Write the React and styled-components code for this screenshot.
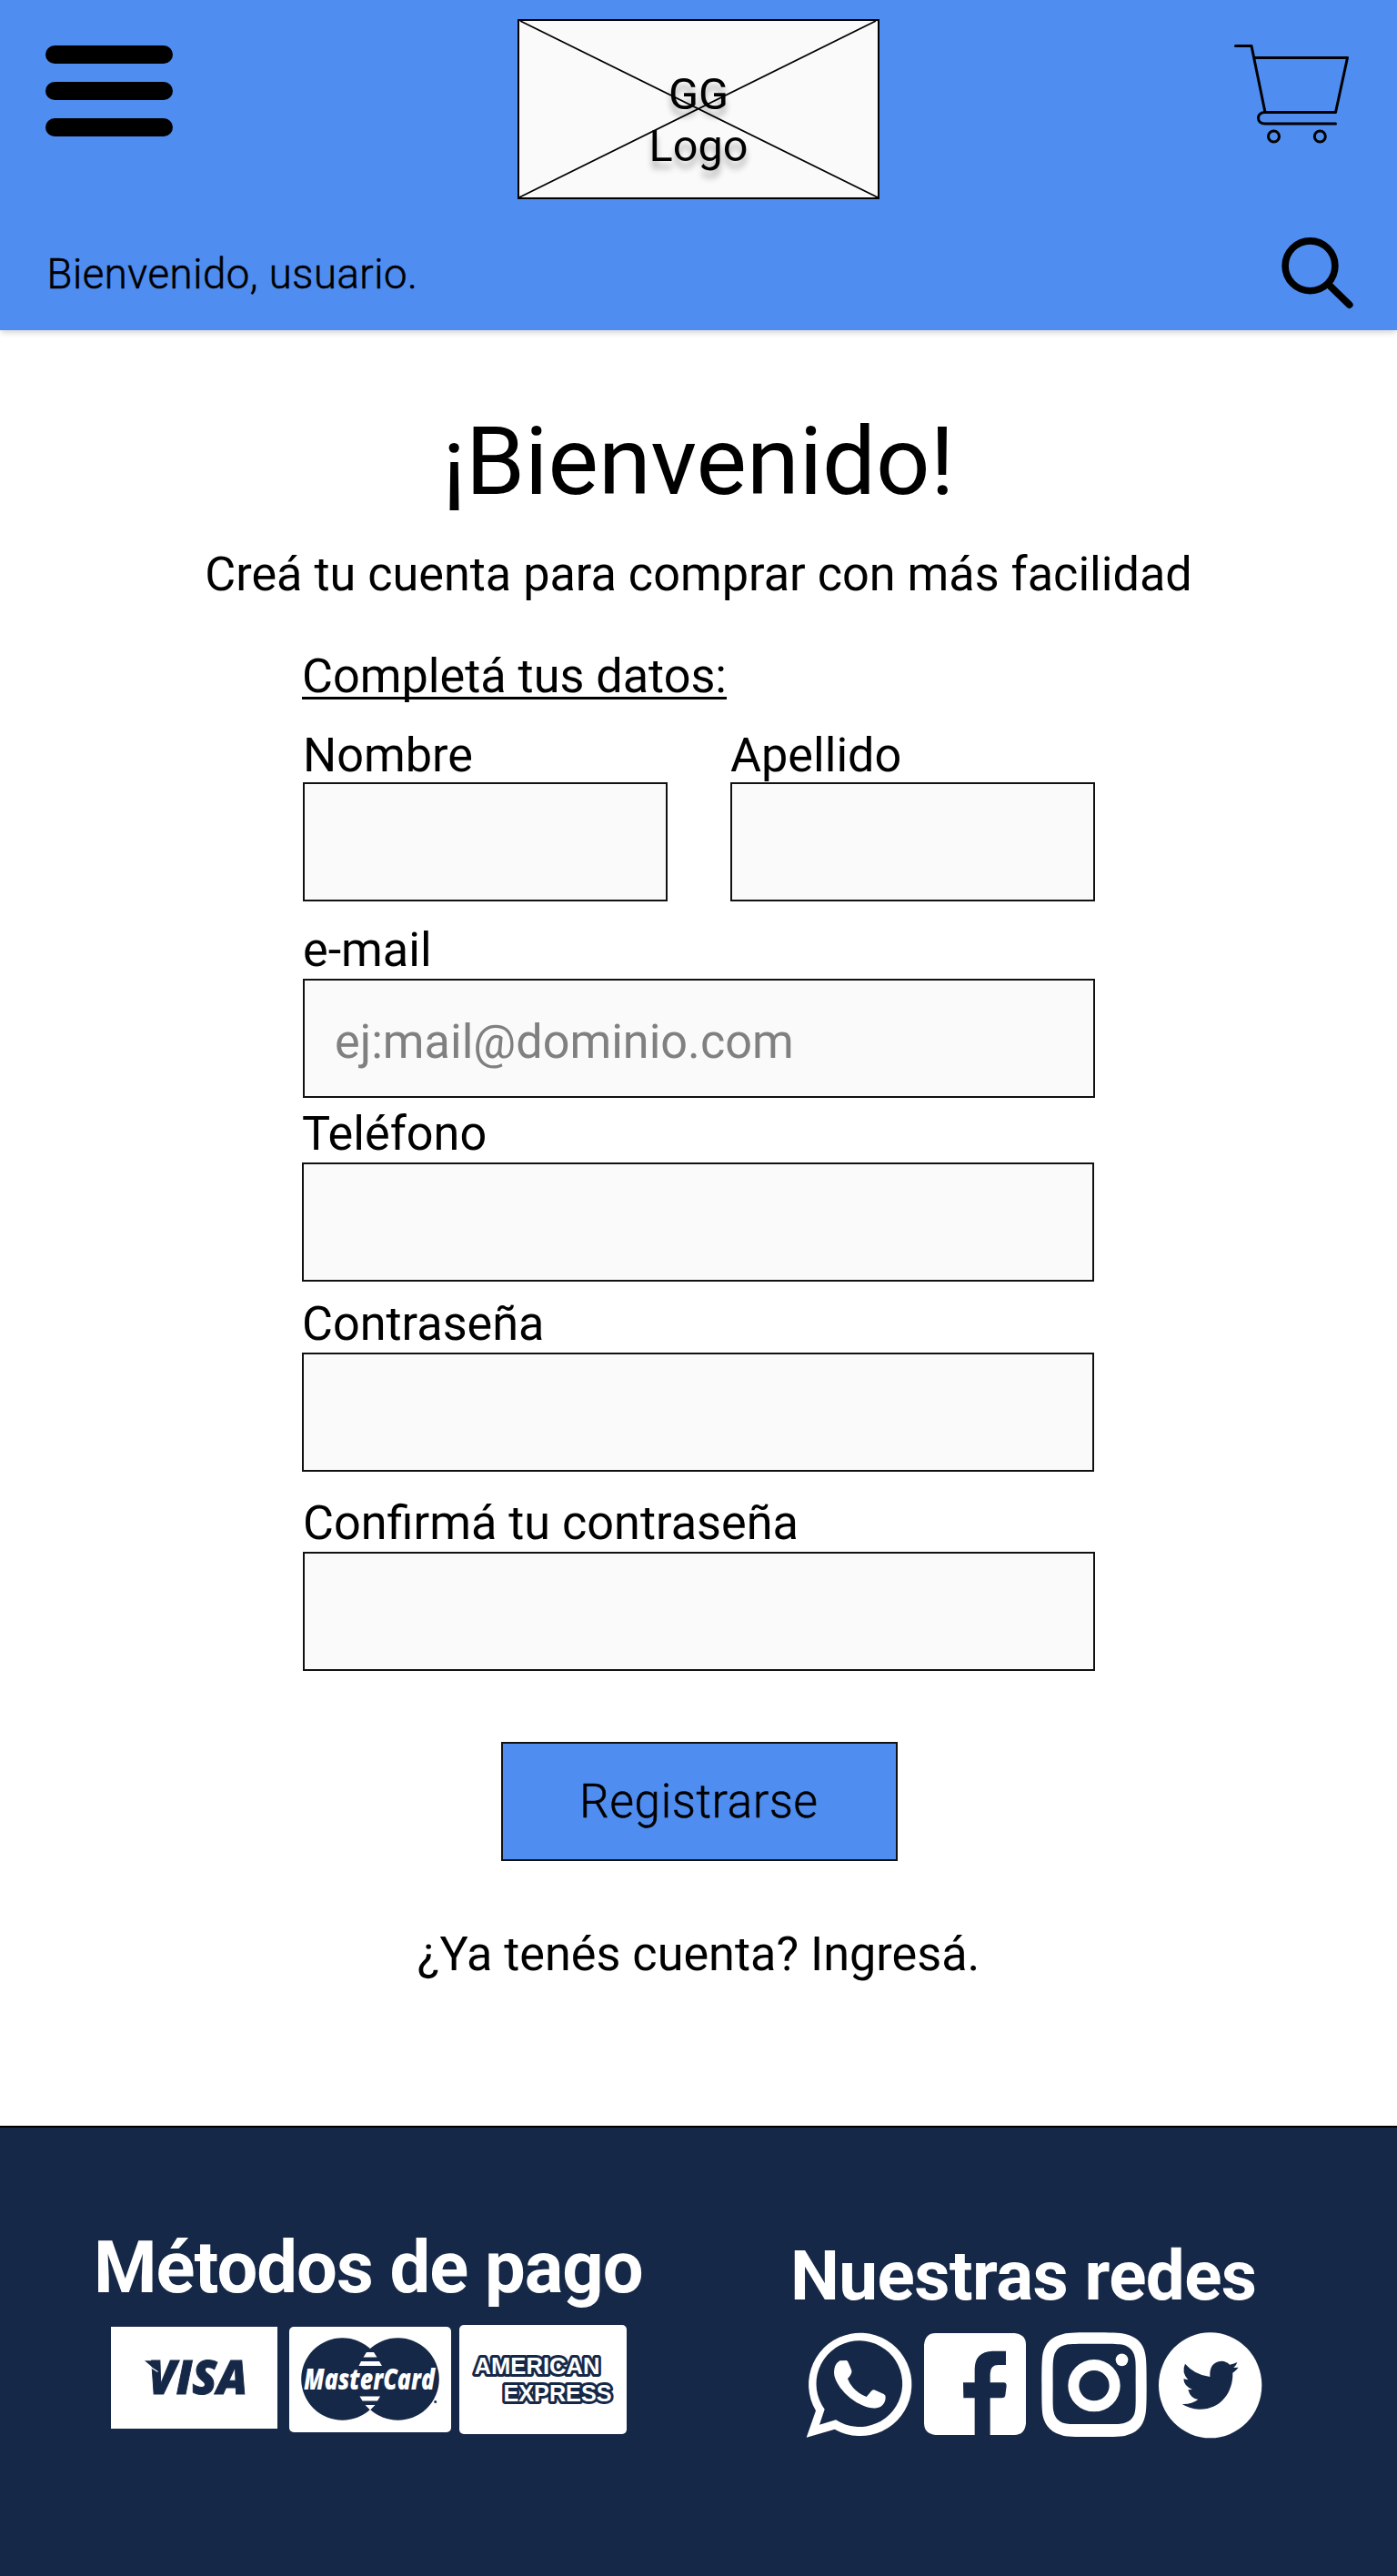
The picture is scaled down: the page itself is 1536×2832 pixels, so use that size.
import React from "react";
import styled, { createGlobalStyle } from "styled-components";

const blue = "#4f8df0";
const navy = "#162847";
const paper = "#fafafa";

const GlobalStyle = createGlobalStyle`
  *, *::before, *::after { box-sizing: border-box; }
  body { margin: 0; background: #fff; }
  #root { font-family: Roboto, "Liberation Sans", sans-serif; color: #000; }
  svg { overflow: visible; }
`;

const Page = styled.div`
  width: 1536px;
  height: 2832px;
  display: flex;
  flex-direction: column;
`;

const Header = styled.header`
  height: 363px;
  flex: none;
  background: ${blue};
  box-shadow: 0 4px 6px -1px rgba(0, 0, 0, 0.16);
  padding: 21px 47px 0 50px;
`;

const TopBar = styled.div`
  display: grid;
  grid-template-columns: 519px 398px 1fr;
  align-items: start;
`;

const MenuButton = styled.div`
  width: 140px;
  margin-top: 29px;
  display: flex;
  flex-direction: column;
  gap: 20px;
`;

const MenuBar = styled.span`
  height: 20px;
  border-radius: 10px;
  background: #000;
`;

const LogoBox = styled.div`
  display: grid;
  height: 198px;
  border: 2px solid #000;
  background: ${paper};
  > * { grid-area: 1 / 1; }
`;

const LogoText = styled.div`
  align-self: start;
  margin-top: 51.5px;
  font-size: 48.6px;
  line-height: 57.5px;
  text-align: center;
  text-shadow: 0 8px 7px rgba(0, 0, 0, 0.3);
`;

const CartSlot = styled.div`
  justify-self: end;
  margin: 26px 5px 0 0;
  line-height: 0;
`;

const Greeting = styled.div`
  display: flex;
  justify-content: space-between;
  align-items: flex-start;
  margin-top: 41px;
`;

const GreetingText = styled.p`
  margin: 15px 0 0 1.5px;
  font-size: 45.5px;
  line-height: 54px;
  font-weight: 300;
  letter-spacing: 0.55px;
  -webkit-text-stroke: 0.6px #000;
`;

const Main = styled.main`
  height: 1974px;
  flex: none;
  display: flex;
  flex-direction: column;
  align-items: center;
  padding-top: 85px;
`;

const Title = styled.h1`
  margin: 0;
  font-size: 104.5px;
  line-height: 120px;
  font-weight: 400;
`;

const Line = styled.p`
  margin: ${(p) => p.$top}px 0 0;
  font-size: 52.2px;
  line-height: 60px;
  white-space: nowrap;
`;

const Form = styled.form`
  width: 871px;
  margin: 52px 0 0 1px;
  display: flex;
  flex-direction: column;
`;

const Legend = styled.div`
  align-self: flex-start;
  margin-left: -1px;
  font-size: 52.2px;
  line-height: 60px;
  text-decoration: underline;
  text-decoration-thickness: 3px;
  text-underline-offset: 5px;
  text-decoration-skip-ink: none;
`;

const FieldPair = styled.div`
  display: grid;
  grid-template-columns: 401px 401px;
  justify-content: space-between;
  margin-top: 26px;
`;

const FieldBox = styled.label`
  display: flex;
  flex-direction: column;
  margin-top: ${(p) => p.$top || 0}px;
  margin-left: ${(p) => -(p.$shift || 0)}px;
  margin-right: ${(p) => p.$shift || 0}px;
  font-size: 52.2px;
  line-height: 62px;
`;

const Input = styled.input`
  width: 100%;
  height: 131px;
  margin: ${(p) => (p.$tight ? -2 : 0)}px 0 0;
  padding: 7px 33px 0;
  border: 2px solid #111;
  border-radius: 0;
  background: ${paper};
  font: inherit;
  outline: none;
  &::placeholder { color: #808080; opacity: 1; }
`;

const Submit = styled.button`
  width: 436px;
  height: 131px;
  align-self: center;
  margin: 78px 0 0 0;
  padding: 0;
  border: 2px solid #111;
  background: ${blue};
  color: #000;
  font: 300 51px/60px Roboto, "Liberation Sans", sans-serif;
  letter-spacing: 0.8px;
  -webkit-text-stroke: 0.6px #000;
`;

const Footer = styled.footer`
  flex: 1;
  display: grid;
  grid-template-columns: 766px 1fr;
  align-items: start;
  padding-left: 103px;
  border-top: 2px solid #000;
  background: ${navy};
  color: #fff;
`;

const FooterColumn = styled.section`
  padding-top: ${(p) => p.$top}px;
`;

const FooterTitle = styled.h2`
  margin: 0 0 ${(p) => p.$gap}px;
  font-size: ${(p) => p.$size}px;
  line-height: ${(p) => p.$line}px;
  letter-spacing: ${(p) => p.$spacing}px;
  font-weight: 700;
  white-space: nowrap;
`;

const CardRow = styled.div`
  display: flex;
  align-items: flex-start;
  margin-left: 19px;
`;

const Card = styled.div`
  width: ${(p) => p.$w}px;
  height: ${(p) => p.$h}px;
  margin: ${(p) => p.$top || 0}px 0 0 ${(p) => p.$left || 0}px;
  border-radius: ${(p) => p.$r || 0}px;
  background: #fff;
  line-height: 0;
`;

const SocialRow = styled.div`
  display: flex;
  align-items: flex-start;
  margin-left: 17px;
  line-height: 0;
`;

const SocialLink = styled.span`
  margin: ${(p) => p.$top || 0}px 0 0 ${(p) => p.$left || 0}px;
`;

const logoFont = '"Open Sans", "Noto Sans", sans-serif';

function Field({ label, placeholder, tight, type = "text", ...layout }) {
  return (
    <FieldBox {...layout}>
      {label}
      <Input type={type} placeholder={placeholder} $tight={tight} />
    </FieldBox>
  );
}

const CartIcon = () => (
  <svg width="128" height="112" viewBox="1356 47 128 112" fill="none" stroke="#000" strokeWidth="3" strokeLinecap="round" strokeLinejoin="round">
    <path d="M1358.5 50.5H1376L1391 123.5H1468.5L1481.5 63.5H1379" />
    <path d="M1391 123.5C1381 123.5 1381 136 1391 136H1468.5" />
    <circle cx="1400.5" cy="150" r="6" />
    <circle cx="1451.3" cy="150" r="6" />
  </svg>
);

const SearchIcon = () => (
  <svg width="80" height="80" viewBox="1409 260 80 80" fill="none" stroke="#000" strokeWidth="7.6" strokeLinecap="round">
    <circle cx="1440.5" cy="292.3" r="27.4" />
    <path d="M1461 313L1483.6 335" strokeWidth="8" />
  </svg>
);

const VisaLogo = () => (
  <svg width="183" height="112" viewBox="122 2558 183 112">
    <text x="163" y="2632" fontFamily={logoFont} fontSize="51.500" fontWeight="800" fontStyle="italic" fill={navy} stroke={navy} strokeWidth="1" textLength="109" lengthAdjust="spacingAndGlyphs">VISA</text>
    <path d="M159 2595.200H174V2608Z" fill={navy} />
    <path d="M162 2600L173.500 2607.500" stroke="#fff" strokeWidth="1.200" />
  </svg>
);

const MasterCardLogo = () => (
  <svg width="178" height="115" viewBox="318 2558 178 115">
    <circle cx="376.500" cy="2615.500" r="45.300" fill={navy} />
    <circle cx="437.500" cy="2615.500" r="45.300" fill={navy} />
    <path d="M403 2586H411L414.500 2591.500H399.500ZM397 2596H417L420 2601H394.500ZM395.500 2634.500H418L415 2639.500H398.500ZM401.500 2644H412.500L407 2649.500Z" fill="#fff" />
    <text x="334" y="2627" fontFamily={logoFont} fontSize="32.500" fontWeight="800" fontStyle="italic" fill="#fff" textLength="144" lengthAdjust="spacingAndGlyphs">MasterCard</text>
    <circle cx="478.700" cy="2640.500" r="1.500" fill={navy} />
  </svg>
);

const AmexLogo = () => (
  <svg width="184" height="120" viewBox="505 2556 184 120" fontFamily='"Liberation Sans", Arial, sans-serif' fontWeight="700" fontSize="25.500" fill="#fff" stroke={navy} strokeWidth="6" strokeLinejoin="round" paintOrder="stroke">
    <text x="521.500" y="2610" textLength="138" lengthAdjust="spacingAndGlyphs">AMERICAN</text>
    <text x="553.500" y="2640" textLength="119" lengthAdjust="spacingAndGlyphs">EXPRESS</text>
  </svg>
);

const WhatsAppIcon = () => (
  <svg width="116" height="116" viewBox="18 27 348 348">
    <path fill="#fff" fillRule="evenodd" d="M20 374L51 286A170 170 0 1 1 113 347ZM63 332L117 316A142 142 0 1 0 80 281Z" />
    <path fill="#fff" d="M130 121L152 120Q156 121 158 127L169 153Q171 159 166 167Q162 174 156 180Q161 195 174 210Q192 230 218 240L236 219Q241 215 247 218L275 231Q282 234 281 242C280 260 271 273 251 277Q232 280 204 268Q160 248 131 209Q111 181 111 160Q111 133 130 121Z" />
  </svg>
);

const FacebookIcon = () => (
  <svg width="112" height="112" viewBox="408 29 336 336">
    <path fill="#fff" fillRule="evenodd" d="M446 29H706Q744 33 744 67V327Q740 365 706 365H626V243H664Q675 243 676 234L680 203Q680 193 671 192H626V163Q626 134 653 134H678V88H634Q575 90 575 148V192H537L538 243H575V365H446Q408 361 408 327V67Q412 29 446 29Z" />
  </svg>
);

const InstagramIcon = () => (
  <svg width="116" height="116" viewBox="15 26 348 348" fill="#fff">
    <path fillRule="evenodd" d="M189 27C239 27 275 28 292 32Q347 45 357 95C362 116 362 155 362 200S362 286 357 303Q346 355 292 367C275 371 237 371 189 371S105 371 87 367Q32 355 20 303C16 284 16 245 16 200S16 114 20 95Q32 43 87 32C105 27 139 27 189 27ZM189 64C151 64 119 64 103 66Q61 72 55 112C52 128 53 163 53 199S52 270 55 286Q62 324 103 328C119 330 151 329 189 329S258 330 274 328Q318 323 324 286C327 270 326 236 326 199S327 128 324 112Q317 71 274 66C258 64 227 64 189 64Z" />
    <path fillRule="evenodd" d="M189 116A86 86 0 1 1 189 288A86 86 0 1 1 189 116ZM189 152A50 50 0 1 0 189 252A50 50 0 1 0 189 152Z" />
    <circle cx="280.500" cy="117" r="20.500" />
  </svg>
);

const TwitterIcon = () => (
  <svg width="114" height="117" viewBox="403 26 342 351">
    <ellipse cx="573" cy="201" rx="170" ry="174" fill="#fff" />
    <path fill={navy} d="M490 130Q522 167 572 173Q569 124 610 121Q627 122 637 133Q648 131 662 125Q659 136 650 143L666 142Q658 153 647 160C649 224 607 282 535 280Q506 279 480 263Q510 265 533 248Q508 245 500 216L514 215Q486 204 485 180L500 183Q477 158 490 130Z" />
  </svg>
);

export default function App() {
  return (
    <Page>
      <GlobalStyle />
      <Header>
        <TopBar>
          <MenuButton>
            <MenuBar />
            <MenuBar />
            <MenuBar />
          </MenuButton>
          <LogoBox>
            <svg width="394" height="194" viewBox="0 0 394 194" stroke="#000" strokeWidth="1.800">
              <path d="M1 0L394 194M0 194L392 0" />
            </svg>
            <LogoText>
              GG
              <br />
              Logo
            </LogoText>
          </LogoBox>
          <CartSlot>
            <CartIcon />
          </CartSlot>
        </TopBar>
        <Greeting>
          <GreetingText>Bienvenido, usuario.</GreetingText>
          <SearchIcon />
        </Greeting>
      </Header>

      <Main>
        <Title>¡Bienvenido!</Title>
        <Line $top={34}>Creá tu cuenta para comprar con más facilidad</Line>
        <Form>
          <Legend>Completá tus datos:</Legend>
          <FieldPair>
            <Field label="Nombre" tight />
            <Field label="Apellido" tight />
          </FieldPair>
          <Field label="e-mail" type="email" placeholder="ej:mail@dominio.com" $top={23} />
          <Field label="Teléfono" type="tel" $top={9} $shift={1} />
          <Field label="Contraseña" type="password" $top={16} $shift={1} />
          <Field label="Confirmá tu contraseña" type="password" $top={26} />
          <Submit type="button">Registrarse</Submit>
        </Form>
        <Line $top={73}>¿Ya tenés cuenta? Ingresá.</Line>
      </Main>

      <Footer>
        <FooterColumn $top={107}>
          <FooterTitle $size={79.5} $line={94} $spacing={-1} $gap={16}>Métodos de pago</FooterTitle>
          <CardRow>
            <Card $w={183} $h={112} $top={2}>
              <VisaLogo />
            </Card>
            <Card $w={178} $h={115.5} $top={2} $left={13} $r={5}>
              <MasterCardLogo />
            </Card>
            <Card $w={184} $h={120} $left={9} $r={5}>
              <AmexLogo />
            </Card>
          </CardRow>
        </FooterColumn>
        <FooterColumn $top={118}>
          <FooterTitle $size={76.4} $line={90} $spacing={-0.6} $gap={17}>Nuestras redes</FooterTitle>
          <SocialRow>
            <SocialLink>
              <WhatsAppIcon />
            </SocialLink>
            <SocialLink $left={14} $top={1}>
              <FacebookIcon />
            </SocialLink>
            <SocialLink $left={17}>
              <InstagramIcon />
            </SocialLink>
            <SocialLink $left={13}>
              <TwitterIcon />
            </SocialLink>
          </SocialRow>
        </FooterColumn>
      </Footer>
    </Page>
  );
}
